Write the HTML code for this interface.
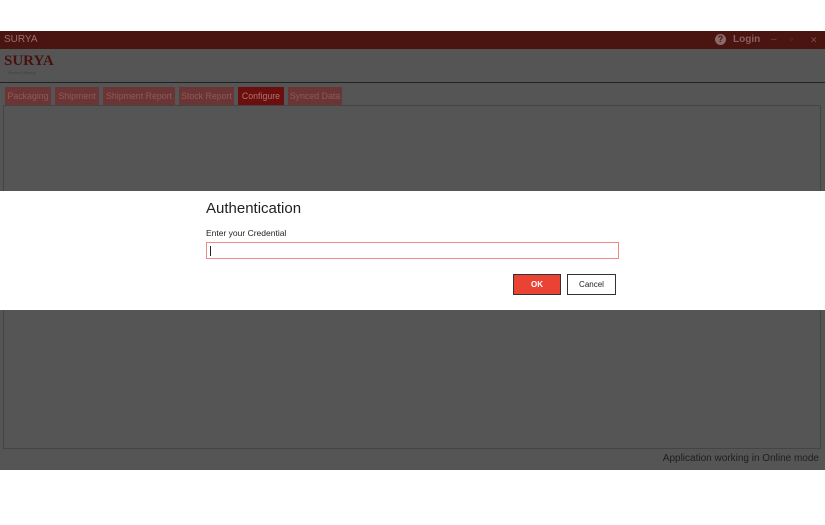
<!DOCTYPE html>
<html><head><style>
*{margin:0;padding:0;box-sizing:border-box}
body{width:825px;height:525px;background:#fff;position:relative;overflow:hidden;font-family:"Liberation Sans",sans-serif}
.app{position:absolute;left:0;top:31px;width:825px;height:439px;background:#555}
.title{position:absolute;left:0;top:0;width:825px;height:18px;background:#4a1411;color:#9a7070;font-size:10px;line-height:18px;padding-left:4px}
.logo{position:absolute;left:4px;top:22px;font-family:"Liberation Serif",serif;font-weight:bold;font-size:15px;color:#4a1010;letter-spacing:0}
.logosub{position:absolute;left:8px;top:39px;font-size:4px;color:#3e3e3e;font-style:italic}
.line{position:absolute;left:0;top:51px;width:825px;height:1px;background:#222}
.tabs{position:absolute;top:56px;left:5px;display:flex;gap:4px}
.tab{height:18px;background:#6a3534;color:#8e5b5a;font-size:8.8px;line-height:18px;text-align:center;white-space:nowrap;overflow:hidden}
.tab.on{background:#6b0e0e;color:#b07474}
.panel{position:absolute;left:3px;top:74px;width:818px;height:344px;border:1px solid #444}
.status{position:absolute;right:6px;top:422px;font-size:10px;color:#1e1e1e}
.dlg{position:absolute;left:0;top:191px;width:825px;height:119px;background:#fff}
.h{position:absolute;left:206px;top:9px;font-size:15px;color:#222}
.lbl{position:absolute;left:206px;top:37px;font-size:8.5px;color:#222}
.inp{position:absolute;left:206px;top:51px;width:413px;height:17px;border:1px solid #f08a84}
.inp i{position:absolute;left:3px;top:3px;width:1px;height:10px;background:#222}
.ok{position:absolute;left:513px;top:83px;width:48px;height:21px;background:#ea4334;border:1px solid #333;color:#fff;font-size:8px;font-weight:bold;text-align:center;line-height:19px}
.cancel{position:absolute;left:567px;top:83px;width:49px;height:21px;background:#fff;border:1px solid #333;color:#222;font-size:8px;text-align:center;line-height:19px}
.ctl{position:absolute;top:0;height:18px;line-height:18px;color:#7a4a48;font-size:10px}
</style></head><body>
<div class="app">
<div class="title">SURYA
<span class="ctl" style="left:715px;width:11px;height:11px;top:3px;background:#8a6a68;border-radius:50%;color:#4a1411;font-size:9px;font-weight:bold;line-height:11px;text-align:center">?</span>
<span class="ctl" style="left:733px;font-weight:bold;font-size:10px;color:#8a6060">Login</span>
<span class="ctl" style="left:771px">–</span>
<span class="ctl" style="left:790px;font-size:8px">▫</span>
<span class="ctl" style="left:810px;font-size:9px">✕</span>
</div>
<div class="logo">SURYA</div>
<div class="logosub">Roshni Udhyog</div>
<div class="line"></div>
<div class="tabs">
<div class="tab" style="width:46px">Packaging</div><div class="tab" style="width:44px">Shipment</div><div class="tab" style="width:72px">Shipment Report</div><div class="tab" style="width:55px">Stock Report</div><div class="tab on" style="width:46px">Configure</div><div class="tab" style="width:54px">Synced Data</div>
</div>
<div class="panel"></div>
<div class="status">Application working in Online mode</div>
</div>
<div class="dlg">
<div class="h">Authentication</div>
<div class="lbl">Enter your Credential</div>
<div class="inp"><i></i></div>
<div class="ok">OK</div>
<div class="cancel">Cancel</div>
</div>
</body></html>
